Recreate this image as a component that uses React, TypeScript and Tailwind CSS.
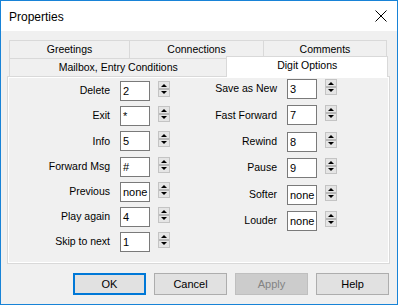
import React from "react";

const font = { fontFamily: '"Liberation Sans", Arial, sans-serif' };

function Spinner() {
  return (
    <svg width="12" height="16" viewBox="0 0 12 16" className="shrink-0">
      <rect x="0.5" y="0.5" width="11" height="15" fill="#e5e5e5" stroke="#c4c4c4" />
      <line x1="1" y1="8" x2="11" y2="8" stroke="#8a8a8a" />
      <path d="M6 3 L9 6 L3 6 Z" fill="#000" />
      <path d="M3 10 L9 10 L6 13 Z" fill="#000" />
    </svg>
  );
}

function Field({ label, value, labelClass }: { label: string; value: string; labelClass: string }) {
  return (
    <div className="flex items-center h-[20px]">
      <span className={labelClass}>{label}</span>
      <div className="ml-[10px] w-[30px] h-[20px] shrink-0 border border-[#7a7a7a] bg-white px-[2px] leading-[18px] text-[11px] overflow-hidden whitespace-nowrap">
        {value}
      </div>
      <div className="ml-[8px] self-start">
        <Spinner />
      </div>
    </div>
  );
}

const left: [string, string][] = [
  ["Delete", "2"],
  ["Exit", "*"],
  ["Info", "5"],
  ["Forward Msg", "#"],
  ["Previous", "none"],
  ["Play again", "4"],
  ["Skip to next", "1"],
];

const right: [string, string][] = [
  ["Save as New", "3"],
  ["Fast Forward", "7"],
  ["Rewind", "8"],
  ["Pause", "9"],
  ["Softer", "none"],
  ["Louder", "none"],
];

function Button({ children, variant }: { children: React.ReactNode; variant?: "default" | "disabled" }) {
  if (variant === "default") {
    return (
      <div className="w-[73px] h-[22px] border-2 border-[#0078d7] bg-[#e1e1e1] flex items-center justify-center text-[11px] text-black">
        {children}
      </div>
    );
  }
  if (variant === "disabled") {
    return (
      <div className="w-[73px] h-[22px] border border-[#bfbfbf] bg-[#cccccc] flex items-center justify-center text-[11px] text-[#838383]">
        {children}
      </div>
    );
  }
  return (
    <div className="w-[73px] h-[22px] border border-[#adadad] bg-[#e1e1e1] flex items-center justify-center text-[11px] text-black">
      {children}
    </div>
  );
}

export default function App() {
  return (
    <div style={font} className="w-[398px] h-[305px] border border-[#1883d7] bg-[#f0f0f0] flex flex-col text-[10.5px] text-black">
      {/* title bar */}
      <div className="h-[30px] bg-white flex items-center justify-between pl-[8px] pr-[10px]">
        <span className="text-[12px] pt-[1px]">Properties</span>
        <svg width="12" height="12" viewBox="0 0 12 12">
          <path d="M0.5 0.5 L11.5 11.5 M11.5 0.5 L0.5 11.5" stroke="#000" strokeWidth="1" />
        </svg>
      </div>

      {/* tabs */}
      <div className="mt-[9px] ml-[8px] w-[379px]">
        <div className="flex h-[18px]">
          <div className="w-[121px] border border-b-0 border-[#d9d9d9] flex items-center justify-center">Greetings</div>
          <div className="w-[135px] -ml-px border border-b-0 border-[#d9d9d9] flex items-center justify-center">Connections</div>
          <div className="w-[124px] -ml-px border border-b-0 border-[#d9d9d9] flex items-center justify-center">Comments</div>
        </div>
        <div className="flex h-[18px] items-end">
          <div className="w-[219px] h-[18px] border border-b-0 border-[#d9d9d9] flex items-center justify-center">
            Mailbox, Entry Conditions
          </div>
          <div className="relative z-10 w-[162px] h-[21px] -ml-px -mb-px border border-b-0 border-[#d9d9d9] bg-white flex items-center justify-center pb-[2px]">
            Digit Options
          </div>
        </div>
      </div>

      {/* panel */}
      <div className="ml-[6px] w-[383px] h-[188px] border border-[#d9d9d9]">
        <div className="h-full border border-white flex">
          <div className="w-[161px] pt-[3px] flex flex-col gap-[5.2px]">
            {left.map(([l, v]) => (
              <Field key={l} label={l} value={v} labelClass="w-[102px] text-right whitespace-nowrap" />
            ))}
          </div>
          <div className="pt-[1px] flex flex-col gap-[6.4px]">
            {right.map(([l, v]) => (
              <Field key={l} label={l} value={v} labelClass="w-[107px] text-right whitespace-nowrap" />
            ))}
          </div>
        </div>
      </div>

      {/* buttons */}
      <div className="mt-[9px] ml-[72px] flex gap-[8px]">
        <Button variant="default">OK</Button>
        <Button>Cancel</Button>
        <Button variant="disabled">Apply</Button>
        <Button>Help</Button>
      </div>
    </div>
  );
}
